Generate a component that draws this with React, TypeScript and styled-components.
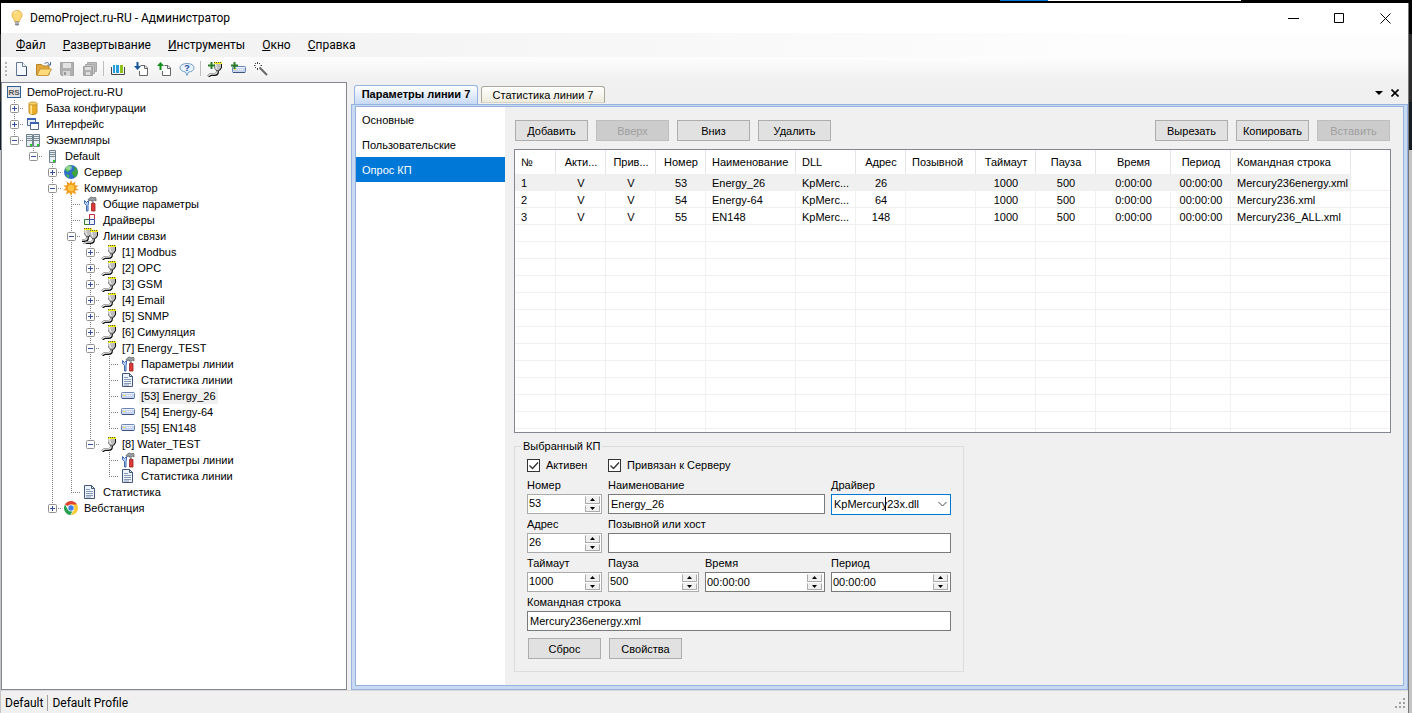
import React, { useId } from "react";
import styled, { createGlobalStyle, css } from "styled-components";

const sans = `"Liberation Sans", Arial, sans-serif`;
const ui = `Roboto, "Open Sans", sans-serif`;

const GlobalStyle = createGlobalStyle`
  *, *::before, *::after { box-sizing: border-box; }
  body { margin: 0; background: #000; color: #000; font: 11px/16px ${sans}; }
  button, input, select { font: inherit; color: inherit; margin: 0; }
`;

/* ---------- window frame ---------- */

const Desktop = styled.div`
  height: 100vh;
  min-height: 600px;
  min-width: 980px;
  display: flex;
  padding: 3px 3px 0 1px;
  background:
    linear-gradient(#0078d7, #0078d7) right 364px top / 48px 1px no-repeat,
    linear-gradient(#fff, #fff) right 171px top / 193px 1px no-repeat,
    linear-gradient(#000 34px, #2b2b2b 34px, #2b2b2b 102px, #141c24 102px, #141c24 150px, #c4c4c4 150px);
`;

const Win = styled.div`
  flex: 1;
  min-width: 0;
  display: flex;
  flex-direction: column;
  background: #f0f0f0;
  border-right: 1px solid #777;
`;

const TitleBar = styled.header`
  display: flex;
  align-items: center;
  height: 30px;
  padding-left: 8px;
  background: #fff;
  font: 12px/16px ${ui};
`;

const Title = styled.h1`
  flex: 1;
  margin: 0 0 0 5px;
  font: inherit;
`;

const CaptionButton = styled.button`
  width: 46px;
  height: 30px;
  padding: 0;
  border: 0;
  background: none;
  display: grid;
  place-items: center;
`;

const MenuBar = styled.nav`
  display: flex;
  align-items: center;
  gap: 1px;
  height: 24px;
  padding-left: 7px;
  background: linear-gradient(90deg, #f0f0f0, #fdfdfd 80%);
  font: 12px/16px ${ui};
`;

const MenuItem = styled.button`
  padding: 0 8px;
  border: 0;
  background: none;
  &::first-letter { text-decoration: underline; }
`;

const ToolBar = styled.div`
  display: flex;
  align-items: center;
  height: 25px;
  padding: 0 0 2px 8px;
  background: linear-gradient(#fdfdfd, #f0f0f0);
  position: relative;
  &::before {
    content: "";
    position: absolute;
    left: 4px;
    top: 5px;
    width: 2px;
    height: 14px;
    background: repeating-linear-gradient(#b4b4b4 0 2px, transparent 2px 4px);
  }
`;

const ToolButton = styled.button`
  width: 23px;
  height: 22px;
  padding: 0;
  border: 0;
  background: none;
  display: grid;
  place-items: center;
`;

const ToolSeparator = styled.span`
  width: 1px;
  height: 15px;
  margin: 0 2px;
  background: #bdbdbd;
`;

const Workspace = styled.main`
  flex: 1;
  min-height: 0;
  display: flex;
`;

/* ---------- explorer tree ---------- */

const Explorer = styled.aside`
  flex: none;
  width: 346px;
  padding: 1px 0 0 3px;
  border: 1px solid #828790;
  background: #fff;
  overflow: hidden;
`;

const TreeRow = styled.div`
  display: flex;
  height: 16px;
`;

const IconSlot = styled.span`
  width: 20px;
  height: 16px;
  padding-left: 1px;
`;

const TreeLabel = styled.span<{ $selected?: boolean }>`
  padding: 0 2px;
  white-space: nowrap;
  background: ${(p) => (p.$selected ? "#f0f0f0" : "none")};
`;

/* ---------- documents ---------- */

const Documents = styled.section`
  flex: 1;
  min-width: 0;
  display: flex;
  flex-direction: column;
  padding-left: 4px;
`;

const TabStrip = styled.div`
  display: flex;
  align-items: flex-end;
  height: 22px;
  padding-left: 3px;
  padding-right: 5px;
`;

const Tab = styled.button<{ $active?: boolean }>`
  width: 124px;
  padding: 0;
  border: 1px solid #aca899;
  border-bottom: 0;
  border-radius: 3px 3px 0 0;
  white-space: nowrap;
  ${(p) =>
    p.$active
      ? css`
          height: 19px;
          margin-right: 3px;
          padding-bottom: 2px;
          border-color: #95b2e0;
          background: linear-gradient(#fff, #c8d9f4);
          font-weight: bold;
        `
      : css`
          height: 17px;
          margin-bottom: 1px;
          border-bottom: 1px solid #d8d5c8;
          background: linear-gradient(#fff, #eeecdd);
        `}
`;

const StripTools = styled.div`
  display: flex;
  align-items: center;
  height: 22px;
  margin-left: auto;
`;

const StripButton = styled.button`
  width: 16px;
  height: 16px;
  padding: 0;
  border: 0;
  background: none;
  display: grid;
  place-items: center;
`;

const DocFrame = styled.div`
  flex: 1;
  min-height: 0;
  display: flex;
  padding: 1px 3px 3px;
  border: 1px solid #95b2e0;
  background: #c8d9f2;
`;

const DocBody = styled.div`
  flex: 1;
  min-width: 0;
  display: flex;
  border: 1px solid #95b2e0;
  background: #f0f0f0;
`;

const SideNav = styled.nav`
  flex: none;
  width: 149px;
  background: #fff;
`;

const SideLink = styled.a<{ $active?: boolean }>`
  display: block;
  height: 25px;
  padding-left: 6px;
  line-height: 27px;
  text-decoration: none;
  color: ${(p) => (p.$active ? "#fff" : "#000")};
  background: ${(p) => (p.$active ? "#0078d7" : "none")};
`;

const Page = styled.div`
  flex: 1;
  min-width: 0;
  display: flex;
  flex-direction: column;
  align-items: flex-start;
  padding: 13px 12px 13px 9px;
`;

const ButtonBar = styled.div`
  display: flex;
  align-self: stretch;
  gap: 8px;
  padding: 0 1px;
`;

const Spacer = styled.span`
  flex: 1;
`;

const Button = styled.button`
  width: 73px;
  height: 21px;
  padding: 0;
  border: 1px solid #adadad;
  background: #e1e1e1;
  white-space: nowrap;
  &:disabled {
    border-color: #bfbfbf;
    background: #ccc;
    color: #a0a0a0;
  }
`;

/* ---------- table ---------- */

const GridBox = styled.div`
  flex: 1 1 0;
  align-self: stretch;
  min-height: 0;
  margin: 8px 0 5px;
  border: 1px solid #828790;
  background: #fff;
  overflow: hidden;
`;

const Grid = styled.table`
  width: 100%;
  table-layout: fixed;
  border-collapse: separate;
  border-spacing: 0;
`;

const HeadCell = styled.th<{ $center?: boolean }>`
  height: 24px;
  padding: 0 5px 0 6px;
  border-right: 1px solid #e5e5e5;
  font-weight: normal;
  white-space: nowrap;
  text-align: ${(p) => (p.$center ? "center" : "left")};
  &:last-child { border-right: 0; }
`;

const Cell = styled.td<{ $center?: boolean }>`
  height: 17px;
  padding: 2px 5px 0 6px;
  line-height: 14px;
  border-right: 1px solid #f0f0f0;
  border-bottom: 1px solid #f0f0f0;
  white-space: nowrap;
  text-align: ${(p) => (p.$center ? "center" : "left")};
  &:last-child { border-right: 0; }
`;

const BodyRow = styled.tr<{ $selected?: boolean }>`
  ${Cell}:not(:last-child) {
    background: ${(p) => (p.$selected ? "#f0f0f0" : "none")};
  }
`;

/* ---------- form ---------- */

const Group = styled.fieldset`
  width: 450px;
  margin: 0;
  padding: 5px 12px 12px;
  border: 1px solid #dcdcdc;
`;

const Legend = styled.legend`
  margin-left: -6px;
  padding: 0 2px;
`;

const CheckRow = styled.div`
  display: grid;
  grid-template-columns: 75px 1fr;
  gap: 6px;
  height: 13px;
  margin-bottom: 7px;
`;

const CheckLabel = styled.label`
  display: flex;
  align-items: center;
  gap: 6px;
  line-height: 13px;
`;

const CheckBox = styled.span`
  position: relative;
  width: 13px;
  height: 13px;
  svg { position: absolute; inset: 0; pointer-events: none; }
  input { display: block; appearance: none; width: 13px; height: 13px; border: 1px solid #333; background: #fff; }
`;

const Fields = styled.div`
  display: grid;
  grid-template-columns: 75px 91px 120px 120px;
  gap: 4px 6px;
`;

const FieldBox = styled.div<{ $span?: number }>`
  grid-column: span ${(p) => p.$span || 1};
  height: 35px;
  label { display: block; height: 15px; line-height: 12px; white-space: nowrap; }
`;

const TextInput = styled.input`
  display: block;
  width: 100%;
  height: 20px;
  padding: 0 2px;
  border: 1px solid #7a7a7a;
  border-radius: 0;
  background: #fff;
  outline: 0;
`;

const SpinBox = styled.div<{ $time?: boolean }>`
  display: flex;
  height: 20px;
  border: 1px solid ${(p) => (p.$time ? "#7a7a7a" : "#ababab")};
  background: #fff;
  padding-right: ${(p) => (p.$time ? 2 : 1)}px;
  input {
    flex: 1;
    min-width: 0;
    height: 16px;
    margin-top: ${(p) => (p.$time ? 1 : 0)}px;
    padding: 0 1px;
    border: 0;
    background: none;
    outline: 0;
    appearance: textfield;
  }
  input::-webkit-inner-spin-button { appearance: none; margin: 0; }
`;

const SpinButtons = styled.span`
  display: flex;
  flex-direction: column;
  gap: 1px;
  width: 15px;
  padding: 1px 0;
  button {
    flex: 1;
    min-height: 0;
    padding: 0;
    border: 1px solid #ababab;
    border-top-color: #f0f0f0;
    background: #f0f0f0;
    display: grid;
    place-items: center;
  }
`;

const ComboBox = styled.div`
  position: relative;
  height: 21px;
  select {
    display: block;
    appearance: none;
    width: 100%;
    height: 21px;
    padding: 0 20px 2px 2px;
    border: 1px solid #0078d7;
    border-radius: 0;
    background: #fff;
    outline: 0;
  }
  svg { position: absolute; right: 4px; top: 7px; pointer-events: none; }
`;

const Caret = styled.i`
  position: absolute;
  left: 54px;
  top: 3px;
  width: 1px;
  height: 14px;
  background: #000;
`;

const GroupButtons = styled.div`
  display: flex;
  gap: 8px;
  padding: 7px 1px 0;
`;

/* ---------- status bar ---------- */

const StatusBar = styled.footer`
  display: flex;
  align-items: center;
  height: 23px;
  padding: 2px 2px 0 4px;
  border-top: 1px solid #d9d9d9;
  font: 12px/16px ${ui};
`;

const StatusItem = styled.span`
  & + & {
    margin-left: 4px;
    padding-left: 4px;
    border-left: 1px solid #a0a0a0;
  }
`;

/* ---------- icons ---------- */

const Svg = ({ children, w = 16, h = 16 }: { children: React.ReactNode; w?: number; h?: number }) => (
  <svg width={w} height={h} viewBox={`0 0 ${w} ${h}`} fill="none" display="block" aria-hidden="true">
    {children}
  </svg>
);

const Plug = () => (
  <>
    <path d="M10.500 9v2c0 2-1 2.500-3 2.500H4.500c-1.500 0-2 .5-3 2" stroke="#111" strokeWidth="2.800" />
    <path d="M10 9v2c0 1.500-1 2-3 2H4.500c-1.500 0-2.500 1-3.200 2" stroke="#e4e4e4" strokeWidth="1.300" />
    <path d="M7 3h8v3.500L13.500 9l-1.500 1h-2L8.500 9 7 6.500z" fill="#111" />
    <path d="M7 3h7v3.500L12.500 8.500l-1 1h-1.500L8.500 8.500 7 6z" fill="#bdbdbd" />
    <path d="M8 3.500h1v2.500l1 2" stroke="#f4f4f4" />
    <path d="M7 1h8v2H7z" fill="#f4ee1c" />
    <path d="M7 1.500h8" stroke="#555" strokeDasharray="1 1" />
  </>
);

const Wrench = () => (
  <>
    <path d="M3.500 15V9.500L1.500 7.500V4.500l2 2 2-2v3l-.500 2V15z" transform="translate(1)" fill="#b9d2f8" stroke="#3d69ad" />
    <path d="M6 3.500l3-2.500 3 1 1-1 1 1.500v2.500l-1.500-1-1 1h-2.500V4L7 4.500z" fill="#9aa2a8" stroke="#555" strokeWidth=".7" />
    <path d="M10 5.500h2v2h-2z" fill="#888" />
    <path d="M9.500 7.500h3.500v7.500h-3.500z" fill="#dc3a3a" stroke="#9d1d1d" strokeWidth=".8" />
  </>
);

const Doc = () => (
  <>
    <path d="M2.500 1.500h7l3 3v10h-10z" fill="#eef3fb" stroke="#41587a" />
    <path d="M9.500 1.500v3h3" stroke="#41587a" />
    <path d="M4 5.500h4M4 7.500h7M4 9.500h7M4 11.500h7M4 13h5" stroke="#6d84a8" strokeWidth=".8" />
  </>
);

const Server = ({ x }: { x: number }) => (
  <g transform={`translate(${x} 0)`}>
    <path d="M.5 2.500h6v12h-6z" fill="#e6eef2" stroke="#71828c" />
    <path d="M1 4.500h5M1 6.500h5M1 8.500h5" stroke="#60717c" strokeWidth=".8" />
    <path d="M4 12h2v2H4z" fill="#1fd31f" />
  </g>
);

const Device = () => (
  <>
    <rect x="1.500" y="4.500" width="13" height="6" rx="1" fill="#c7d5ee" stroke="#6c84b2" />
    <path d="M2 5.500h12" stroke="#edf3ff" />
    <path d="M3 7.500h2" stroke="#f5e94c" />
    <path d="M7 7.500h5" stroke="#fff" strokeDasharray="1 1" />
    <path d="M2 10.500h12" stroke="#3f5480" />
  </>
);

const Floppy = () => (
  <>
    <path d="M1.500 1.500h13v13h-12l-1-1z" fill="#b0b0b0" stroke="#a3a3a3" />
    <path d="M4 2h8v5H4z" fill="#e2e2e2" />
    <path d="M4 10h7v5H4z" fill="#d6d6d6" />
    <path d="M5 11h2v3H5z" fill="#989898" />
  </>
);

const Plus = () => <path d="M1 4.500h7M4.500 1v7" stroke="#2b7d2b" strokeWidth="2" />;

const icons: Record<string, React.ReactNode> = {
  project: (
    <>
      <rect x="1.500" y="2.500" width="13" height="11" fill="#e4e4e4" stroke="#2f5f94" />
      <text x="8" y="11" textAnchor="middle" fontFamily="Liberation Sans" fontWeight="bold" fontSize="8" fill="#555">
        RS
      </text>
    </>
  ),
  database: (
    <>
      <path d="M4 3.500v9c0 1 1.500 2 4 2s4-1 4-2v-9z" fill="#e9ae2c" stroke="#c48e24" />
      <path d="M5 4h2v10H5.500z" fill="#ffe491" />
      <ellipse cx="8" cy="3.500" rx="4" ry="1.500" fill="#fbd671" stroke="#c48a1c" strokeWidth=".8" />
    </>
  ),
  windows: (
    <>
      <path d="M2.500 2.500h8v7h-8z" fill="#e8effa" stroke="#556a8f" />
      <path d="M2 2h9v2H2z" fill="#3a63b5" />
      <path d="M5.500 6.500h8v7h-8z" fill="#fff" stroke="#556a8f" />
      <path d="M5 6h9v2H5z" fill="#3a63b5" />
    </>
  ),
  servers: (
    <>
      <Server x={1} />
      <Server x={8} />
    </>
  ),
  server: <Server x={5} />,
  globe: (
    <>
      <circle cx="8" cy="8" r="7" fill="#2f6fc9" />
      <path d="M2 4.500C3.500 2 6 1 8 1.200L9 3 7 4.500v2L4.500 8 3 7z" fill="#4dbb4a" />
      <path d="M10 3l3 .500 2 4.500-1.500 4-2 1.500L10 11l-1.500-2L10 7l2-1z" fill="#3da53c" />
      <path d="M3 10l3 1v2.500l-1 .5z" fill="#4dbb4a" />
      <ellipse cx="6" cy="4" rx="3" ry="2" fill="#fff" opacity=".4" />
    </>
  ),
  sun: (
    <>
      <path
        d="M8 0l1.300 3.500L12.500 1.500 11.700 5.200 15.500 5.500 12.700 8 16 10l-4 .600 1 4-3.400-2L8 16l-1.600-3.400-3.400 2 1-4L0 10l3.300-2L.5 5.500l3.800-.3L3.500 1.500l3.200 2z"
        fill="#f29a1d"
      />
      <circle cx="8" cy="8" r="3.200" fill="#ffc545" />
    </>
  ),
  tools: <Wrench />,
  drivers: (
    <>
      <path d="M7.500 2.500h5v5h-5z" fill="#fff3f3" stroke="#c22b3f" />
      <path d="M2.500 7.500h5v5h-5z" fill="#f1fbf0" stroke="#317d33" />
      <path d="M7.500 7.500h5v5h-5z" fill="#eff2ff" stroke="#404f9f" />
    </>
  ),
  lines: (
    <>
      <g transform="translate(-5 -1)">
        <Plug />
      </g>
      <g transform="translate(1 1)">
        <Plug />
      </g>
    </>
  ),
  plug: <Plug />,
  doc: <Doc />,
  device: <Device />,
  chrome: (
    <>
      <circle cx="8" cy="8" r="7" fill="#fff" />
      <path d="M8 8L1.940 4.500A7 7 0 0 1 14.060 4.500z" fill="#e0442f" />
      <path d="M8 4.500h6.060A7 7 0 0 1 8 15l3-5.300z" fill="#fbc92e" />
      <path d="M1.940 4.500L5 9.800 9.500 11 7.500 15A7 7 0 0 1 1.940 4.500z" fill="#26a04c" />
      <circle cx="8" cy="8" r="3.400" fill="#fff" />
      <circle cx="8" cy="8" r="2.700" fill="#3f7fe8" />
    </>
  ),
  newFile: (
    <>
      <path d="M3.500 1.500h6l4 4v9h-10z" fill="#f4f8ff" stroke="#65799a" />
      <path d="M9.500 1.500v4h4" fill="#fff" stroke="#65799a" />
      <path d="M13.500 6v8.500H4" stroke="#33496d" />
    </>
  ),
  open: (
    <>
      <path d="M.5 14V3.500h5l1.500 1.500h6v9z" fill="#e2a83c" stroke="#b8832b" />
      <path d="M1 14.500l3-6.500h11.500l-3.500 6.500z" fill="#ffdb7b" stroke="#c99a3a" />
      <path d="M8.500 3c1.500-2 3.500-2 5 .5M14.500 1v3h-3" stroke="#44679f" />
    </>
  ),
  save: <Floppy />,
  saveAll: (
    <>
      <path d="M5.500 1.500h9v9h-9z" fill="#bdbdbd" stroke="#a8a8a8" />
      <path d="M3.500 3.500h9v9h-9z" fill="#c8c8c8" stroke="#a8a8a8" />
      <path d="M1.500 5.500h9v9h-9z" fill="#b0b0b0" stroke="#a0a0a0" />
      <path d="M3 6h6v3H3zM4 11h4v3H4z" fill="#dedede" />
    </>
  ),
  library: (
    <>
      <path d="M1.500 6v7.500h13V6" stroke="#474747" />
      <path d="M3 4h2v8H3zM6 4h3v8H6z" fill="#239fe0" />
      <path d="M10 4h3v8h-3z" fill="#8fc31c" />
    </>
  ),
  download: (
    <>
      <path d="M7.500 4.500h4.500l2.500 2.500v7.500h-8V10" fill="#fff" stroke="#666" />
      <path d="M11.500 4.500v3h3" stroke="#666" />
      <path d="M3.500 1h2v4H8l-3.500 4L1 5h2.500z" fill="#17589c" />
    </>
  ),
  upload: (
    <>
      <path d="M8.500 4.500h3.500l2.500 2.500v7.500h-8V10" fill="#fff" stroke="#666" />
      <path d="M11.500 4.500v3h3" stroke="#666" />
      <path d="M3.500 9h2V5H8L4.500 1 1 5h2.500z" fill="#109019" />
    </>
  ),
  help: (
    <>
      <path d="M8 2.500c4 0 7 1.700 7 4.200S12.500 11 9.500 11L8 14.500 6.500 11C3.500 10.700 1 9 1 6.700s3-4.200 7-4.200z" fill="#e7f3ff" stroke="#6f9cc4" />
      <text x="8" y="10" textAnchor="middle" fontFamily="Liberation Sans" fontWeight="bold" fontSize="9" fill="#1c46a0">
        ?
      </text>
    </>
  ),
  addLine: (
    <>
      <Plug />
      <Plus />
    </>
  ),
  addDevice: (
    <>
      <g transform="translate(1 1)">
        <Device />
      </g>
      <Plus />
    </>
  ),
  wand: (
    <>
      <path d="M6.500 6.500l7.500 7.500" stroke="#666" strokeWidth="2" />
      <path d="M4.500 1v2M4.500 7v2M1 4.500h1.500M7.500 4.500H9M2 2l1 1M7 2L6 3M2 7l1-1" stroke="#444" />
    </>
  ),
};

const Icon = ({ name }: { name: string }) => <Svg>{icons[name]}</Svg>;

/* ---------- tree ---------- */

type Node = { text: string; icon: string; open?: boolean; leaf?: boolean; selected?: boolean; kids?: Node[] };

const line = (text: string, kids?: Node[]): Node => ({ text, icon: "plug", open: !!kids, kids });
const leaf = (text: string, icon: string, selected?: boolean): Node => ({ text, icon, leaf: true, selected });

const tree: Node = {
  text: "DemoProject.ru-RU",
  icon: "project",
  open: true,
  kids: [
    { text: "База конфигурации", icon: "database" },
    { text: "Интерфейс", icon: "windows" },
    {
      text: "Экземпляры",
      icon: "servers",
      open: true,
      kids: [
        {
          text: "Default",
          icon: "server",
          open: true,
          kids: [
            { text: "Сервер", icon: "globe" },
            {
              text: "Коммуникатор",
              icon: "sun",
              open: true,
              kids: [
                leaf("Общие параметры", "tools"),
                leaf("Драйверы", "drivers"),
                {
                  text: "Линии связи",
                  icon: "lines",
                  open: true,
                  kids: [
                    line("[1] Modbus"),
                    line("[2] OPC"),
                    line("[3] GSM"),
                    line("[4] Email"),
                    line("[5] SNMP"),
                    line("[6] Симуляция"),
                    line("[7] Energy_TEST", [
                      leaf("Параметры линии", "tools"),
                      leaf("Статистика линии", "doc"),
                      leaf("[53] Energy_26", "device", true),
                      leaf("[54] Energy-64", "device"),
                      leaf("[55] EN148", "device"),
                    ]),
                    line("[8] Water_TEST", [leaf("Параметры линии", "tools"), leaf("Статистика линии", "doc")]),
                  ],
                },
                leaf("Статистика", "doc"),
              ],
            },
            { text: "Вебстанция", icon: "chrome" },
          ],
        },
      ],
    },
  ],
};

const Guide = ({ through }: { through: boolean }) => (
  <Svg w={19}>{through && <path d="M9.500 0v16" stroke="#808080" strokeDasharray="1 1" />}</Svg>
);

const Joint = ({ node, last }: { node: Node; last: boolean }) => (
  <Svg w={19}>
    <path d={`M9.500 0v${last ? 8 : 16}`} stroke="#808080" strokeDasharray="1 1" />
    <path d="M9 8.500h10" stroke="#808080" strokeDasharray="1 1" />
    {!node.leaf && (
      <>
        <rect x="5.500" y="4.500" width="8" height="8" rx="1" fill="#fff" stroke="#919191" />
        <path d="M7 8.500h5" stroke="#34519b" />
        {!node.open && <path d="M9.500 6v5" stroke="#34519b" />}
      </>
    )}
  </Svg>
);

const TreeNode = ({ node, guides = [], last = true, root }: { node: Node; guides?: boolean[]; last?: boolean; root?: boolean }) => (
  <div role="treeitem" aria-selected={!!node.selected}>
    <TreeRow>
      {guides.map((g, i) => (
        <Guide key={i} through={g} />
      ))}
      {!root && <Joint node={node} last={last} />}
      <IconSlot>
        <Icon name={node.icon} />
      </IconSlot>
      <TreeLabel $selected={node.selected}>{node.text}</TreeLabel>
    </TreeRow>
    {node.open && node.kids && (
      <div role="group">
        {node.kids.map((kid, i) => (
          <TreeNode
            key={i}
            node={kid}
            guides={root ? [] : [...guides, !last]}
            last={i === node.kids!.length - 1}
          />
        ))}
      </div>
    )}
  </div>
);

/* ---------- form controls ---------- */

const Check = ({ label }: { label: string }) => (
  <CheckLabel>
    <CheckBox>
      <input type="checkbox" defaultChecked />
      <Svg w={13} h={13}>
        <path d="M2.500 6.500l3 3 5.500-6" stroke="#333" strokeWidth="1.300" />
      </Svg>
    </CheckBox>
    {label}
  </CheckLabel>
);

const TextField = ({ label, value, span }: { label: string; value: string; span: number }) => {
  const id = useId();
  return (
    <FieldBox $span={span}>
      <label htmlFor={id}>{label}</label>
      <TextInput id={id} defaultValue={value} />
    </FieldBox>
  );
};

const SpinField = ({ label, value, time }: { label: string; value: string; time?: boolean }) => {
  const id = useId();
  return (
    <FieldBox>
      <label htmlFor={id}>{label}</label>
      <SpinBox $time={time}>
        <input id={id} type={time ? "text" : "number"} defaultValue={value} />
        <SpinButtons>
          <button type="button" aria-label="Увеличить">
            <Svg w={5} h={3}>
              <path d="M0 3l2.500-3L5 3z" fill="#000" />
            </Svg>
          </button>
          <button type="button" aria-label="Уменьшить">
            <Svg w={5} h={3}>
              <path d="M0 0l2.500 3L5 0z" fill="#000" />
            </Svg>
          </button>
        </SpinButtons>
      </SpinBox>
    </FieldBox>
  );
};

const DriverField = () => {
  const id = useId();
  return (
    <FieldBox>
      <label htmlFor={id}>Драйвер</label>
      <ComboBox>
        <select id={id} defaultValue="KpMercury23x.dll">
          <option>KpMercury23x.dll</option>
        </select>
        <Caret />
        <Svg w={9} h={7}>
          <path d="M.5 1l4 4 4-4" stroke="#444" />
        </Svg>
      </ComboBox>
    </FieldBox>
  );
};

/* ---------- data ---------- */

const columns: [string, number, boolean][] = [
  ["№", 41, false],
  ["Акти...", 50, true],
  ["Прив...", 50, true],
  ["Номер", 50, true],
  ["Наименование", 90, false],
  ["DLL", 60, false],
  ["Адрес", 50, true],
  ["Позывной", 70, false],
  ["Таймаут", 60, true],
  ["Пауза", 60, true],
  ["Время", 75, true],
  ["Период", 60, true],
  ["Командная строка", 120, false],
];

const rows = [
  ["1", "V", "V", "53", "Energy_26", "KpMerc...", "26", "", "1000", "500", "0:00:00", "00:00:00", "Mercury236energy.xml"],
  ["2", "V", "V", "54", "Energy-64", "KpMerc...", "64", "", "1000", "500", "0:00:00", "00:00:00", "Mercury236.xml"],
  ["3", "V", "V", "55", "EN148", "KpMerc...", "148", "", "1000", "500", "0:00:00", "00:00:00", "Mercury236_ALL.xml"],
  ...Array.from({ length: 13 }, () => columns.map(() => "")),
];

const menus = ["Файл", "Развертывание", "Инструменты", "Окно", "Справка"];

const tools: [string, string][] = [
  ["newFile", "Создать"],
  ["open", "Открыть"],
  ["save", "Сохранить"],
  ["saveAll", "Сохранить все"],
  ["|", ""],
  ["library", "Экземпляр"],
  ["download", "Скачать конфигурацию"],
  ["upload", "Передать конфигурацию"],
  ["help", "Статус"],
  ["|", ""],
  ["addLine", "Добавить линию"],
  ["addDevice", "Добавить КП"],
  ["wand", "Мастер"],
];

export default function App() {
  return (
    <>
      <GlobalStyle />
      <Desktop>
        <Win>
          <TitleBar>
            <Svg>
              <path d="M8 .5c3 0 5 2 5 4.700C13 8 10.500 8.500 10.500 11.500h-5C5.500 8.500 3 8 3 5.200 3 2.500 5 .5 8 .5z" fill="#ffd978" stroke="#e7b44d" />
              <path d="M5.500 3c.5-1 1.500-1.500 2.500-1.500" stroke="#fff" />
              <path d="M6 11.500h4v3l-1 1H7l-1-1z" fill="#7f8790" />
              <path d="M6 13h4" stroke="#d9dde0" />
            </Svg>
            <Title>DemoProject.ru-RU - Администратор</Title>
            <CaptionButton aria-label="Свернуть">
              <Svg w={11} h={11}>
                <path d="M0 5.500h11" stroke="#000" />
              </Svg>
            </CaptionButton>
            <CaptionButton aria-label="Развернуть">
              <Svg w={11} h={11}>
                <path d="M.5.5h9v9h-9z" stroke="#000" />
              </Svg>
            </CaptionButton>
            <CaptionButton aria-label="Закрыть">
              <Svg w={11} h={11}>
                <path d="M.5.5l10 10M10.500.5l-10 10" stroke="#000" />
              </Svg>
            </CaptionButton>
          </TitleBar>
          <MenuBar>
            {menus.map((m) => (
              <MenuItem key={m}>{m}</MenuItem>
            ))}
          </MenuBar>
          <ToolBar>
            {tools.map(([icon, label], i) =>
              icon === "|" ? (
                <ToolSeparator key={i} />
              ) : (
                <ToolButton key={i} aria-label={label}>
                  <Icon name={icon} />
                </ToolButton>
              )
            )}
          </ToolBar>
          <Workspace>
            <Explorer role="tree">
              <TreeNode node={tree} root />
            </Explorer>
            <Documents>
              <TabStrip>
                <Tab $active>Параметры линии 7</Tab>
                <Tab>Статистика линии 7</Tab>
                <StripTools>
                  <StripButton aria-label="Список окон">
                    <Svg w={8} h={4}>
                      <path d="M0 0h8L4 4z" fill="#000" />
                    </Svg>
                  </StripButton>
                  <StripButton aria-label="Закрыть вкладку">
                    <Svg w={8} h={8}>
                      <path d="M.5.5l7 7M7.500.5l-7 7" stroke="#000" strokeWidth="1.600" />
                    </Svg>
                  </StripButton>
                </StripTools>
              </TabStrip>
              <DocFrame>
                <DocBody>
                  <SideNav>
                    <SideLink href="#main">Основные</SideLink>
                    <SideLink href="#custom">Пользовательские</SideLink>
                    <SideLink href="#polling" $active>
                      Опрос КП
                    </SideLink>
                  </SideNav>
                  <Page>
                    <ButtonBar>
                      <Button>Добавить</Button>
                      <Button disabled>Вверх</Button>
                      <Button>Вниз</Button>
                      <Button>Удалить</Button>
                      <Spacer />
                      <Button>Вырезать</Button>
                      <Button>Копировать</Button>
                      <Button disabled>Вставить</Button>
                    </ButtonBar>
                    <GridBox>
                      <Grid>
                        <colgroup>
                          {columns.map(([name, width]) => (
                            <col key={name} width={width} />
                          ))}
                          <col />
                        </colgroup>
                        <thead>
                          <tr>
                            {columns.map(([name, , center]) => (
                              <HeadCell key={name} $center={center}>
                                {name}
                              </HeadCell>
                            ))}
                            <HeadCell />
                          </tr>
                        </thead>
                        <tbody>
                          {rows.map((row, r) => (
                            <BodyRow key={r} $selected={r === 0}>
                              {row.map((value, c) => (
                                <Cell key={c} $center={columns[c][2]}>
                                  {value}
                                </Cell>
                              ))}
                              <Cell />
                            </BodyRow>
                          ))}
                        </tbody>
                      </Grid>
                    </GridBox>
                    <Group>
                      <Legend>Выбранный КП</Legend>
                      <CheckRow>
                        <Check label="Активен" />
                        <Check label="Привязан к Серверу" />
                      </CheckRow>
                      <Fields>
                        <SpinField label="Номер" value="53" />
                        <TextField label="Наименование" value="Energy_26" span={2} />
                        <DriverField />
                        <SpinField label="Адрес" value="26" />
                        <TextField label="Позывной или хост" value="" span={3} />
                        <SpinField label="Таймаут" value="1000" />
                        <SpinField label="Пауза" value="500" />
                        <SpinField label="Время" value="00:00:00" time />
                        <SpinField label="Период" value="00:00:00" time />
                        <TextField label="Командная строка" value="Mercury236energy.xml" span={4} />
                      </Fields>
                      <GroupButtons>
                        <Button>Сброс</Button>
                        <Button>Свойства</Button>
                      </GroupButtons>
                    </Group>
                  </Page>
                </DocBody>
              </DocFrame>
            </Documents>
          </Workspace>
          <StatusBar>
            <StatusItem>Default</StatusItem>
            <StatusItem>Default Profile</StatusItem>
            <Spacer />
            <Svg w={11} h={11}>
              <path d="M8 0h2v2H8zM4 4h2v2H4zM8 4h2v2H8zM0 8h2v2H0zM4 8h2v2H4zM8 8h2v2H8z" fill="#a0a0a0" />
            </Svg>
          </StatusBar>
        </Win>
      </Desktop>
    </>
  );
}
